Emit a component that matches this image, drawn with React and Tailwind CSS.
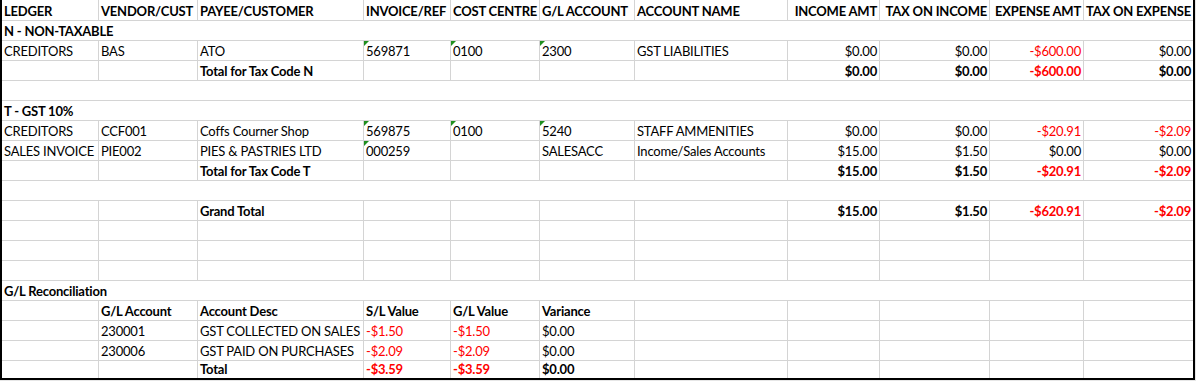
const COLS = 'grid grid-cols-[97px_99px_166px_87px_89px_95px_153px_92px_110px_94px_109px]';

// cell value: string, or { t, b (bold), r (red), right, tri (green corner) }
const header = [
  { t: 'LEDGER', b: true },
  { t: 'VENDOR/CUST', b: true },
  { t: 'PAYEE/CUSTOMER', b: true },
  { t: 'INVOICE/REF', b: true },
  { t: 'COST CENTRE', b: true },
  { t: 'G/L ACCOUNT', b: true },
  { t: 'ACCOUNT NAME', b: true },
  { t: 'INCOME AMT', b: true, right: true },
  { t: 'TAX ON INCOME', b: true, right: true },
  { t: 'EXPENSE AMT', b: true, right: true },
  { t: 'TAX ON EXPENSE', b: true, right: true },
];

const money = (t, opts = {}) => ({ t, right: true, r: t.startsWith('-'), ...opts });
const tri = (t) => ({ t, tri: true });

const rows = [
  { first: true, cells: header },
  { title: 'N - NON-TAXABLE' },
  {
    cells: ['CREDITORS', 'BAS', 'ATO', tri('569871'), tri('0100'), tri('2300'), 'GST LIABILITIES',
      money('$0.00'), money('$0.00'), money('-$600.00'), money('$0.00')],
  },
  {
    cells: ['', '', { t: 'Total for Tax Code N', b: true }, '', '', '', '',
      money('$0.00', { b: true }), money('$0.00', { b: true }), money('-$600.00', { b: true }), money('$0.00', { b: true })],
  },
  { title: '' },
  { title: 'T - GST 10%' },
  {
    cells: ['CREDITORS', 'CCF001', 'Coffs Courner Shop', tri('569875'), tri('0100'), tri('5240'), 'STAFF AMMENITIES',
      money('$0.00'), money('$0.00'), money('-$20.91'), money('-$2.09')],
  },
  {
    cells: ['SALES INVOICE', 'PIE002', 'PIES & PASTRIES LTD', tri('000259'), '', 'SALESACC', 'Income/Sales Accounts',
      money('$15.00'), money('$1.50'), money('$0.00'), money('$0.00')],
  },
  {
    cells: ['', '', { t: 'Total for Tax Code T', b: true }, '', '', '', '',
      money('$15.00', { b: true }), money('$1.50', { b: true }), money('-$20.91', { b: true }), money('-$2.09', { b: true })],
  },
  { title: '' },
  {
    cells: ['', '', { t: 'Grand Total', b: true }, '', '', '', '',
      money('$15.00', { b: true }), money('$1.50', { b: true }), money('-$620.91', { b: true }), money('-$2.09', { b: true })],
  },
  { cells: Array(11).fill('') },
  { cells: Array(11).fill('') },
  { cells: Array(11).fill('') },
  { title: 'G/L Reconciliation' },
  {
    cells: ['', { t: 'G/L Account', b: true }, { t: 'Account Desc', b: true }, { t: 'S/L Value', b: true },
      { t: 'G/L Value', b: true }, { t: 'Variance', b: true }, '', '', '', '', ''],
  },
  {
    cells: ['', '230001', 'GST COLLECTED ON SALES', { t: '-$1.50', r: true }, { t: '-$1.50', r: true }, '$0.00', '', '', '', '', ''],
  },
  {
    cells: ['', '230006', 'GST PAID ON PURCHASES', { t: '-$2.09', r: true }, { t: '-$2.09', r: true }, '$0.00', '', '', '', '', ''],
  },
  {
    last: true,
    cells: ['', '', { t: 'Total', b: true }, { t: '-$3.59', r: true, b: true }, { t: '-$3.59', r: true, b: true },
      { t: '$0.00', b: true }, '', '', '', '', ''],
  },
];

function Cell({ value, isLast }) {
  const v = typeof value === 'string' ? { t: value } : value;
  return (
    <div
      className={`relative flex items-end px-[2px] pb-[1px] whitespace-nowrap ${isLast ? '' : 'border-r border-[#d4d4d4]'} ${v.right ? 'justify-end' : 'justify-start'} ${v.b ? 'font-bold' : 'font-normal'} ${v.r ? 'text-[#ff0000]' : 'text-black'}`}
    >
      {v.tri && (
        <span className="absolute left-0 top-0 w-0 h-0 border-t-[5px] border-t-[#1f8f1f] border-r-[5px] border-r-transparent" />
      )}
      <span>{v.t}</span>
    </div>
  );
}

export default function App() {
  return (
    <div className="w-[1196px] h-[381px] bg-[#e6e6e6] overflow-hidden">
      <div className="w-[1195px] h-[380px] bg-white border-l-2 border-r-2 border-b-2 border-black font-[Lato,'Liberation_Sans',sans-serif] text-[13px] leading-[16px] tracking-[-0.2px]">
        {rows.map((row, i) =>
          row.title !== undefined ? (
            <div key={i} className="h-[20px] flex items-end px-[2px] pb-[1px] font-bold border-b border-[#d4d4d4] text-black">
              {row.title}
            </div>
          ) : (
            <div
              key={i}
              className={`${COLS} ${row.last ? 'h-[17px]' : row.first ? 'h-[21px] border-b border-[#d4d4d4]' : 'h-[20px] border-b border-[#d4d4d4]'}`}
            >
              {row.cells.map((c, j) => (
                <Cell key={j} value={c} isLast={j === row.cells.length - 1} />
              ))}
            </div>
          )
        )}
      </div>
    </div>
  );
}
